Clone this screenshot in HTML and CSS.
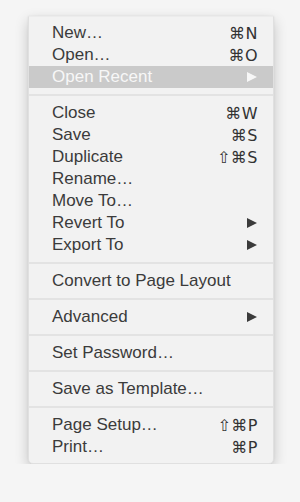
FILE: index.html
```html
<!DOCTYPE html>
<html>
  <head>
    <title>File menu</title>
    <meta charset="utf-8" />
    <meta name="viewport" content="width=device-width, initial-scale=1.0" />
    <link rel="stylesheet" href="styles.css">
  </head>
  <body>
    <div class="menu">
      <div class="menu_item"><span class="label">New…</span><span class="key">⌘N</span></div>
      <div class="menu_item"><span class="label">Open…</span><span class="key">⌘O</span></div>
      <div class="menu_item selected"><span class="label">Open Recent</span><span class="arrow"></span></div>
      <div class="separator"></div>
      <div class="menu_item"><span class="label">Close</span><span class="key">⌘W</span></div>
      <div class="menu_item"><span class="label">Save</span><span class="key">⌘S</span></div>
      <div class="menu_item"><span class="label">Duplicate</span><span class="key">⇧⌘S</span></div>
      <div class="menu_item"><span class="label">Rename…</span></div>
      <div class="menu_item"><span class="label">Move To…</span></div>
      <div class="menu_item"><span class="label">Revert To</span><span class="arrow"></span></div>
      <div class="menu_item"><span class="label">Export To</span><span class="arrow"></span></div>
      <div class="separator"></div>
      <div class="menu_item"><span class="label">Convert to Page Layout</span></div>
      <div class="separator"></div>
      <div class="menu_item"><span class="label">Advanced</span><span class="arrow"></span></div>
      <div class="separator"></div>
      <div class="menu_item"><span class="label">Set Password…</span></div>
      <div class="separator"></div>
      <div class="menu_item"><span class="label">Save as Template…</span></div>
      <div class="separator"></div>
      <div class="menu_item"><span class="label">Page Setup…</span><span class="key">⇧⌘P</span></div>
      <div class="menu_item"><span class="label">Print…</span><span class="key">⌘P</span></div>
    </div>
  </body>
</html>
```

FILE: styles.css
```css
html {
  background-color: #f5f5f5;
}

body {
  margin: 0;
  padding: 16px 26px 0 28px;
  background-color: #f5f5f5;
  font-family: "Liberation Sans", Arial, "DejaVu Sans", sans-serif;
}

.menu {
  width: 246px;
  box-sizing: border-box;
  padding: 5px 0;
  background-color: #f2f2f2;
  border: 1px solid #e0e0e0;
  border-top-color: #ececec;
  border-radius: 0 0 5px 5px;
  box-shadow: 0 5px 14px rgba(0, 0, 0, 0.2), 0 0 2px rgba(0, 0, 0, 0.08);
}

.menu_item {
  height: 22px;
  display: flex;
  align-items: center;
  justify-content: space-between;
  padding: 0 15px 0 23px;
  font-size: 17px;
  color: #3b3b3b;
}

.menu_item.selected {
  background-color: #cacaca;
  color: #f7f7f7;
}

.key {
  font-family: "DejaVu Sans", sans-serif;
  font-size: 16px;
  letter-spacing: 0.5px;
  color: #333;
}

.arrow {
  width: 0;
  height: 0;
  margin-right: 1px;
  border-top: 5.5px solid transparent;
  border-bottom: 5.5px solid transparent;
  border-left: 10px solid #3b3b3b;
}

.selected .arrow {
  border-left-color: #f7f7f7;
}

.separator {
  height: 14px;
  display: flex;
  align-items: center;
}

.separator::before {
  content: "";
  flex: 1;
  height: 2px;
  background-color: #e3e3e3;
}
```
